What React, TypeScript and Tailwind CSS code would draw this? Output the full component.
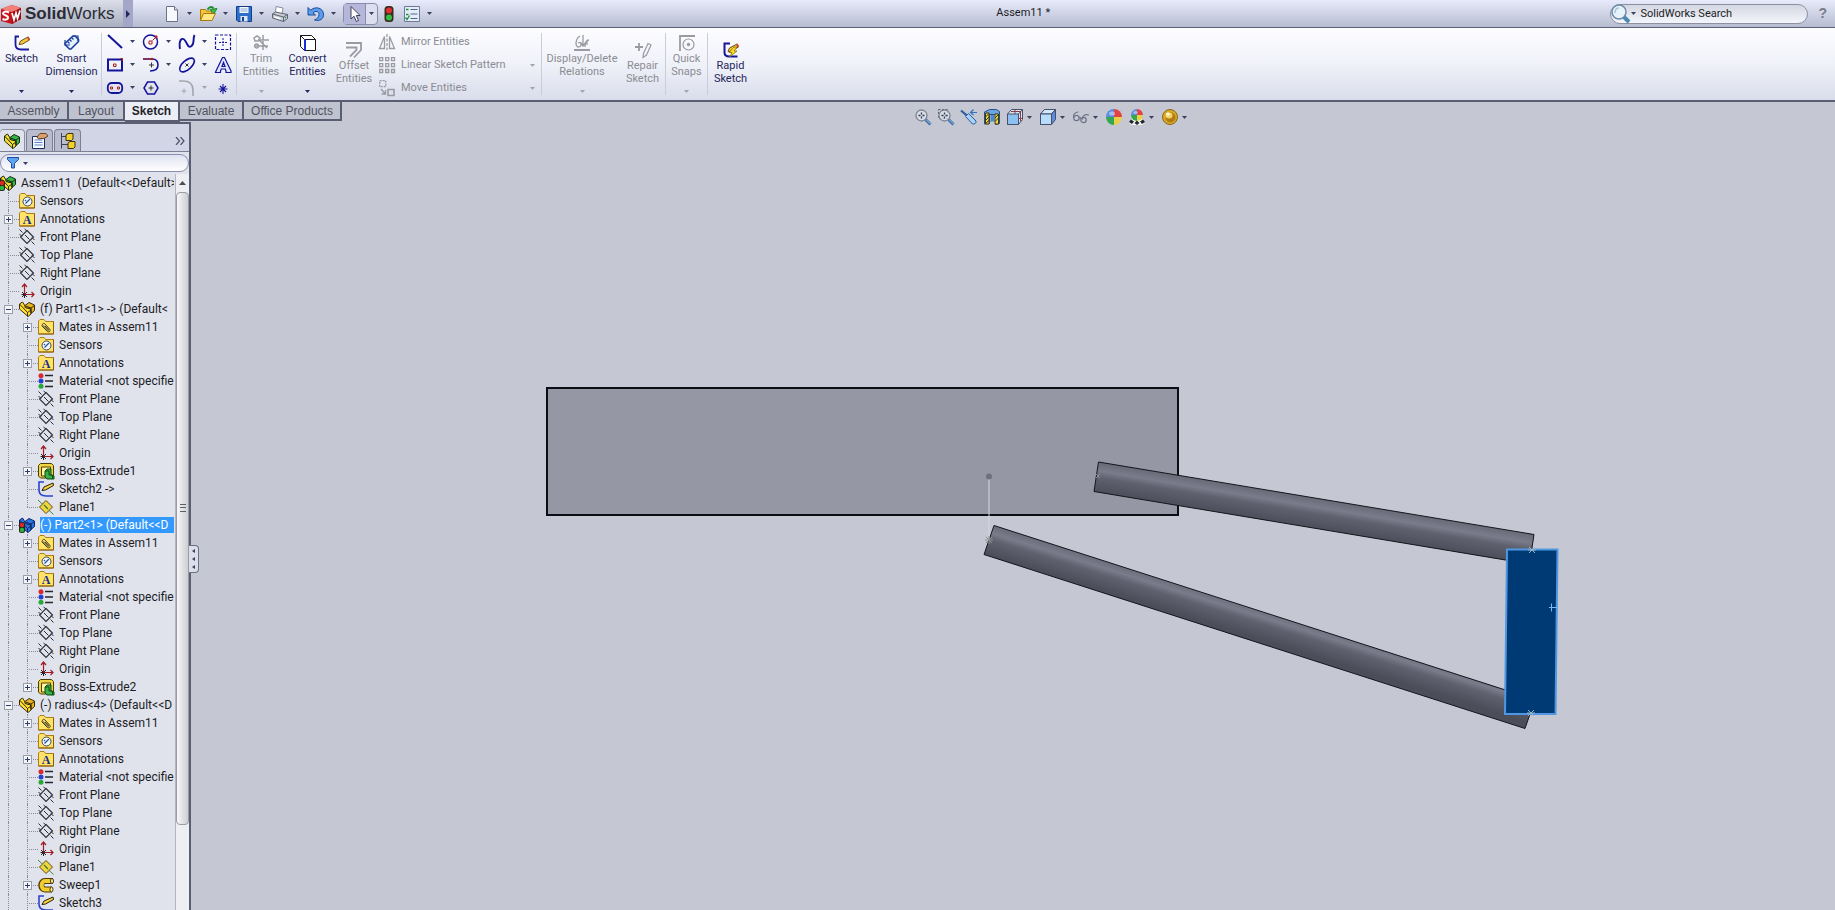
import React from "react";

type Kids = { children?: React.ReactNode };

const Icon = ({ children, size = "h-4 w-4" }: Kids & { size?: string }) => (
  <svg viewBox="0 0 16 16" className={`${size} shrink-0 overflow-visible`} fill="none" aria-hidden="true">
    {children}
  </svg>
);

const Caret = ({ className = "text-[#3c4160]" }: { className?: string }) => (
  <svg viewBox="0 0 5 3" className={`h-[3px] w-[5px] shrink-0 ${className}`} aria-hidden="true">
    <path d="M0 0h5L2.500 3z" fill="currentColor" />
  </svg>
);

/* ---------- title bar icons ---------- */

const LogoCube = () => (
  <svg viewBox="0 0 22 20" className="h-5 w-[22px] shrink-0" aria-hidden="true">
    <path d="M1 5 12 1l9 3v11l-9 5L1 17z" fill="#c8141c" />
    <path d="m1 5 11-4 9 3-9 4z" fill="#f08078" />
    <path d="M12 8l9-4v11l-9 5z" fill="#a00c14" />
    <path d="M9 8.500C6 7 3 7.500 3 9.500s5 1.500 5 4-3.500 2.500-5.500 1.500" stroke="#fff" strokeWidth="2" fill="none" />
    <path d="m12 9 2 7 2-7 1.500 5.500L20 6.500" stroke="#fff" strokeWidth="1.700" fill="none" />
  </svg>
);

const NewIcon = () => (
  <Icon>
    <path d="M2.500.5h8l3 3.500v11.500h-11z" fill="#f7f9fd" stroke="#6c7388" />
    <path d="M10.500.5V4h3" stroke="#6c7388" fill="#dfe4ee" />
  </Icon>
);
const OpenIcon = () => (
  <Icon>
    <path d="M.5 14.500v-11h5l1 1.500h5v3" fill="#f3c53c" stroke="#a8780c" />
    <path d="m.5 14.500 3-7h12l-3.500 7z" fill="#ffe680" stroke="#a8780c" />
    <path d="M7.500 3.500C9 1 12 0 13.500 2.500" stroke="#1f8c2c" strokeWidth="2" />
    <path d="M17 2.500 14 7.500 10 3.500z" fill="#3cc04a" stroke="#1f8c2c" />
  </Icon>
);
const SaveIcon = () => (
  <Icon>
    <path d="M.5.5h15v15H2l-1.500-1.500z" fill="#2c6fc8" stroke="#123f8c" />
    <path d="M3.500 1h9v6h-9z" fill="#f4f8ff" />
    <path d="M4.500 3h7m-7 2h7" stroke="#8ca6d0" />
    <path d="M4.500 10h7v5.500h-7z" fill="#dde6f6" />
    <path d="M6 11h2v4H6z" fill="#173f86" />
  </Icon>
);
const PrintIcon = () => (
  <Icon>
    <path d="m3.500 7 .5-6.500 7 1.500-1 5.500" fill="#fff" stroke="#8890a0" />
    <path d="m.5 8 3-2 12 2.500v4l-4 3-11-3.500z" fill="#c8ccd4" stroke="#5c6270" />
    <path d="m.5 8 11 3 4-2.500M11.500 11v4.500" stroke="#5c6270" />
    <path d="m2.500 11 6 1.700" stroke="#fff" strokeWidth="1.500" />
    <circle cx="13.500" cy="11.500" r=".8" fill="#2c9c3c" />
  </Icon>
);
const UndoIcon = () => (
  <Icon>
    <path d="M0 1.500V9h7.500L5 6.800C7.500 4.500 11 5 11 8.500c0 2.700-2 4.500-4.500 5.500C11.500 15.500 16 13 15.500 8 15 1.500 7 0 2.500 4.200z" fill="#5c9ce8" stroke="#1a4da0" />
  </Icon>
);
const CursorIcon = () => (
  <Icon>
    <path d="M4 .5v12.500l3-2.800L9.300 15.500l2.200-1-2.200-5H13z" fill="#fff" stroke="#404458" />
  </Icon>
);
const LightIcon = () => (
  <Icon>
    <rect x="3.500" y="0" width="9" height="16" rx="3.500" fill="#3a2c20" />
    <circle cx="8" cy="4.500" r="3" fill="#e03030" />
    <circle cx="8" cy="11.500" r="3" fill="#30c040" />
  </Icon>
);
const OptionsIcon = () => (
  <Icon>
    <path d="M.5.500h15v15H.5z" fill="#e6edf6" stroke="#6a7a98" />
    <path d="M6.500 3.500h7m-7 4.500h7m-7 4.500h7" stroke="#4c6890" />
    <path d="M2 3.500h2.500M2 8.500h2.500M1.500 11.500 3 13.500l2.500-4" stroke="#219040" strokeWidth="1.300" />
  </Icon>
);

/* ---------- ribbon icons ---------- */

const Pencil = () => (
  <>
    <path d="m5 9.500 1.500-3.500L14 2l1.500 3L8.500 9z" fill="#f6c63c" stroke="#5c4010" strokeWidth=".9" />
    <path d="m13 2.500 1.500 3 1.500-1-1.200-3z" fill="#c84838" />
  </>
);
const SketchIcon = () => (
  <Icon>
    <path d="M5 1.500H1.500v8c0 3.500 2 5 5.500 5h8" stroke="#1a1a9c" strokeWidth="1.800" />
    <Pencil />
  </Icon>
);
const DimensionIcon = () => (
  <Icon>
    <path d="M1 8.500 3.500 6 9 1h2l3.500 3.500v2L7 14H5.500L1.500 10z" fill="#e4f1ff" stroke="#1c3c9c" strokeWidth="1.600" />
    <path d="m3.500 6.500 2 2m0-4 2 2m0-4 2 2" stroke="#1c3c9c" strokeWidth="1.200" />
    <path d="M1 5v5h5M9 1h5v5" stroke="#1c3c9c" strokeWidth="1.200" />
  </Icon>
);
const navy = "#14149a";
const red = "#b01c1c";
const LineIcon = () => (
  <Icon>
    <path d="m1 1 14 13" stroke={navy} strokeWidth="2" />
  </Icon>
);
const CircleIcon = () => (
  <Icon>
    <circle cx="7.500" cy="8" r="7" stroke={navy} strokeWidth="1.500" />
    <path d="M6 7h3v3H6zM9.500 6.500 14 2m-3 0h3v3" stroke={red} />
  </Icon>
);
const SplineIcon = () => (
  <Icon>
    <path d="M1 15C-.5 6 3 2.500 6 6.500s3 8 6.500 5.500 1-7 3-11" stroke={navy} strokeWidth="1.900" />
  </Icon>
);
const RegionIcon = () => (
  <Icon>
    <path d="M.5 1h15v14.500H.5z" stroke={navy} strokeDasharray="3 1.500" strokeWidth="1.200" />
    <path d="M4 8.500h9M8 4v9" stroke={navy} strokeDasharray="2 1" />
  </Icon>
);
const RectIcon = () => (
  <Icon>
    <path d="M1 2.500h14v11H1z" stroke={navy} strokeWidth="2" />
    <path d="M6.500 7h2.500v2.500H6.500zM13.500 1.500h2V4" stroke={red} />
  </Icon>
);
const ArcIcon = () => (
  <Icon>
    <path d="M0 2h9c4 0 6 2.500 6 6 0 4-3 6-8 6" stroke={navy} strokeWidth="1.600" />
    <path d="M0 2h8" stroke={red} />
    <path d="M6 8h5M8.500 5.500v5" stroke="#333" />
    <circle cx="9" cy="2" r="1.300" fill={red} />
  </Icon>
);
const EllipseIcon = () => (
  <Icon>
    <ellipse cx="8" cy="8" rx="9" ry="4.500" transform="rotate(-42 8 8)" stroke={navy} strokeWidth="1.600" />
    <path d="m6.500 6.500 3 3m0-3-3 3" stroke="#333" />
  </Icon>
);
const TextAIcon = () => (
  <Icon>
    <path d="M.5 15.500h5v-1.500l.8-2h4l.7 2v1.500h5V14L9.500 .5h-2L1 14zM7 9.500h3L8.500 5.500z" fill="#dfe4ff" stroke={navy} strokeWidth="1.200" />
  </Icon>
);
const SlotIcon = () => (
  <Icon>
    <rect x="0.800" y="3" width="14.400" height="10" rx="4" stroke={navy} strokeWidth="1.800" />
    <path d="M3.500 7h2v2h-2zM10.500 7h2v2h-2z" stroke={red} />
  </Icon>
);
const PolygonIcon = () => (
  <Icon>
    <path d="M4.500 2h7L15 8l-3.500 6h-7L1 8z" stroke={navy} strokeWidth="1.500" />
    <path d="M5.500 8h5M8 5.500v5" stroke="#333" />
  </Icon>
);
const FilletIcon = () => (
  <Icon>
    <path d="M0 1h4c7 0 10 3 10 9v6" stroke="#a4a6ae" strokeWidth="1.600" />
    <path d="M2.500 11h5M5 8.500v5" stroke="#a4a6ae" />
  </Icon>
);
const PointIcon = () => (
  <Icon>
    <path d="M8 4v10M3.500 9h9M5 6l6 6m0-6-6 6" stroke={navy} strokeWidth="1.100" />
  </Icon>
);
const grey = "#9a9ba2";
const TrimIcon = () => (
  <Icon>
    <path d="M1 11h14M10 0v5m0 1v9M5 5h11M1 3l3-2 3 2-2 3H2zM6 5l3 3 5 5" stroke={grey} strokeWidth="1.500" />
    <circle cx="3.500" cy="11" r="2" stroke={grey} strokeWidth="1.300" />
  </Icon>
);
const ConvertIcon = () => (
  <Icon>
    <path d="M.5.5h11l4 4v11h-11l-4-4z" fill="#fff" stroke="#16161c" />
    <path d="M4.500 4.500h11m-15-4 4 4" stroke="#16161c" />
    <path d="M5 4.500v11" stroke="#1c2ce0" strokeWidth="2" />
  </Icon>
);
const OffsetIcon = () => (
  <Icon>
    <path d="M0 1h15v7l-7 7.500M0 5.500h10.500V8L4 14.500" stroke={grey} strokeWidth="1.800" />
  </Icon>
);
const MirrorIcon = () => (
  <Icon>
    <path d="M5.500 2.500v12h-5zM10.500 2.500v12h5z" stroke={grey} strokeWidth="1.300" />
    <path d="M8 0v16" stroke={grey} strokeDasharray="3 1.500" strokeWidth="1.300" />
  </Icon>
);
const PatternIcon = () => (
  <Icon>
    <path d="M.7.7h3v3h-3zM6.700.7h3v3h-3zM12.500.7h3v3h-3zM.7 6.700h3v3h-3zM6.700 6.700h3v3h-3zM12.500 6.700h3v3h-3zM.7 12.500h3v3h-3zM6.700 12.500h3v3h-3zM12.500 12.500h3v3h-3z" stroke={grey} strokeWidth="1.300" />
  </Icon>
);
const MoveIcon = () => (
  <Icon>
    <path d="M.7.7h6v6h-6z" stroke={grey} strokeDasharray="2 1" strokeWidth="1.300" />
    <path d="M9 9.500h6v6H9z" stroke={grey} strokeWidth="1.600" />
    <path d="m2 9 4 4.500M6.500 10v4h-4" stroke={grey} strokeWidth="1.300" />
  </Icon>
);
const RelationsIcon = () => (
  <Icon>
    <path d="M6 1C1 4 1 12 4.500 12S8 6 4 8M9 0v10m-2.500-3L9 11l3-4M11 12c0-4 1-7 4-7m-2 0v5" stroke={grey} strokeWidth="1.300" />
    <path d="M0 15h16" stroke={grey} strokeWidth="2" />
  </Icon>
);
const RepairIcon = () => (
  <Icon>
    <path d="M0 5h8M4 1v8" stroke={grey} strokeWidth="1.800" />
    <path d="m8 15.500.5-4L13 1.500l3 1.500-4.500 10z" stroke={grey} strokeWidth="1.200" />
  </Icon>
);
const SnapsIcon = () => (
  <Icon>
    <path d="M1 16V1h15" stroke={grey} strokeWidth="1.800" />
    <circle cx="9.500" cy="9.500" r="5.500" stroke={grey} strokeWidth="1.200" />
    <circle cx="9.500" cy="9.500" r="1.700" fill={grey} />
  </Icon>
);
const RapidIcon = () => (
  <Icon>
    <path d="M7 1.500H1.500v9c0 3 2 4 5 4h8" stroke="#1414a0" strokeWidth="2" />
    <Pencil />
    <path d="m11 5-5 5.500h3L6.500 15 14 9h-3l3-4z" fill="#ffe020" stroke="#8c6c08" strokeWidth=".8" />
  </Icon>
);

/* ---------- view toolbar icons ---------- */

const Lens = ({ area = false }: { area?: boolean }) => (
  <Icon>
    {area && <path d="M.5.500h9v9h-9z" stroke="#5c6278" strokeDasharray="2 1.500" />}
    <path d="m10.500 10.500 5 5" stroke="#3c6ca8" strokeWidth="3" />
    <path d="m11 10.500 4.500 4.500" stroke="#9cc4ec" strokeWidth="1" />
    <circle cx="6.500" cy="6.500" r="5.500" fill="#dfe5ee" fillOpacity=".7" stroke="#7c8494" strokeWidth="1.300" />
    <path d="M3.500 6.500h2m2 0h2m-3-3v2m0 2v2" stroke="#343a4c" strokeWidth="1.300" />
  </Icon>
);
const PrevViewIcon = () => (
  <Icon>
    <path d="m0 1.500 7 6" stroke="#2c5ca0" strokeWidth="2.200" />
    <path d="m4.500 7.500 3-3L15 12c.5 2-1.500 3.500-3.500 3z" fill="#a8d0f4" stroke="#2c5ca0" />
    <path d="M16 3.500h-6m2.500-3L9.500 3.500l3 2.500" stroke="#3474bc" strokeWidth="1.200" />
  </Icon>
);
const SectionIcon = () => (
  <Icon>
    <path d="m.5 3 5-2.500h7l3 2v12l-4 1v-10h-6v9l-5 .5z" fill="#6ca4e0" stroke="#24508c" />
    <path d="M1.500 4h3.500v11H1.500zM11 5h3.500v10H11z" fill="#f4d83c" stroke="#3c3810" />
    <path d="m1.500 8 3.500-3.500m-3.500 7L5 8m-3.500 6.500L5 11.500M11 9l3.500-3.500M11 12.500 14.500 9" stroke="#3c3810" />
    <path d="M6.500 6h4v6l-4 1z" fill="#4c88d0" />
  </Icon>
);
const CubeIcon = ({ wire = false }: { wire?: boolean }) => (
  <Icon>
    <path d="m.5 5 4-4.500h11v10l-4 5H.500z" fill={wire ? "#dce2ee" : "#5c8cdc"} stroke="#46506c" />
    {!wire && <path d="m.5 5 4-4.500h11l-4 4.500z" fill="#d4e8fc" stroke="#46506c" />}
    <path d="M.5 5h11v10.500H.500z" fill={wire ? "#8cc0f0" : "#b8dcfa"} stroke="#46506c" />
    <path d="m11.500 5 4-4.500" stroke="#46506c" />
    {wire && <path d="M8 .5V5m-4-2.500h10m-.5 0v10m-2-3h4" stroke="#84404c" />}
  </Icon>
);
const GlassesIcon = () => (
  <Icon>
    <path d="M5.500 3C2 3 0 5.500.5 9m9 1.500C9 7 12 4.500 16 6" stroke="#6c7284" strokeWidth="1.200" />
    <circle cx="3.500" cy="9" r="2.700" stroke="#6c7284" strokeWidth="1.200" />
    <circle cx="10.500" cy="11" r="2.700" stroke="#6c7284" strokeWidth="1.200" />
    <path d="M6 8.500c1-1 2 0 2 1.500" stroke="#6c7284" />
  </Icon>
);
const BallIcon = () => (
  <>
    <path d="M8 8V0a8 8 0 0 0-8 8z" fill="#5c8ce0" />
    <path d="M8 8h8a8 8 0 0 0-8-8z" fill="#e04444" />
    <path d="M8 8v8a8 8 0 0 0 8-8z" fill="#e8d04c" />
    <path d="M8 8H0a8 8 0 0 0 8 8z" fill="#34a850" />
    <ellipse cx="6" cy="4.500" rx="3" ry="2" fill="#fff" fillOpacity=".45" />
  </>
);
const AppearanceIcon = () => (
  <Icon>
    <BallIcon />
  </Icon>
);
const SceneIcon = () => (
  <Icon>
    <path d="m0 14 3-4h10l3 4-3 2H3z" fill="#f4f4f4" />
    <path d="m0 13 2-2.500 3 2-2 2.500zm5.500 1L8 11.500l2.500 2.500L8 16zm5.500-1.500 3-2 2 2.500-3 2z" fill="#24262c" />
    <g transform="translate(2 0) scale(.75)">
      <BallIcon />
    </g>
  </Icon>
);
const RenderIcon = () => (
  <Icon>
    <circle cx="8" cy="8" r="7.500" fill="#d8a828" stroke="#8c6814" />
    <circle cx="8.500" cy="8.500" r="5" fill="#b07c14" />
    <ellipse cx="7" cy="6.500" rx="3.500" ry="3" fill="#f4d468" />
    <ellipse cx="6" cy="5" rx="1.800" ry="1.500" fill="#fffce0" />
  </Icon>
);

/* ---------- feature tree icons ---------- */

const PartShape = ({ a, b, line }: { a: string; b: string; line: string }) => (
  <>
    <path d="m.5 3 3-2 3.500 5.500 5 1.500v5l-3 2.500L.500 8z" fill={a} stroke={line} />
    <path d="m.5 3 8 8.500v4M8.500 11.500 12 9" stroke={line} />
    <path d="m6 4.500 4-3L15.500 4v5.500L12 12.500V8L6 6.500z" fill={b} stroke={line} />
    <path d="m6.500 5 5.500 2 3.500-2.500M12 7v5" stroke={line} />
  </>
);
const PartIcon = () => (
  <Icon>
    <PartShape a="#ffe030" b="#e8b420" line="#3c2c08" />
  </Icon>
);
const AssemblyIcon = () => (
  <Icon>
    <PartShape a="#f8dc30" b="#34b848" line="#1c2c10" />
  </Icon>
);
const RootIcon = () => (
  <Icon>
    <PartShape a="#f8dc30" b="#34b848" line="#1c2c10" />
    <rect x="-1" y="5" width="6" height="11" rx="2.500" fill="#282420" />
    <circle cx="2" cy="8" r="2.200" fill="#e02828" />
    <circle cx="2" cy="13" r="2.200" fill="#28b838" />
  </Icon>
);
const SelectedPartIcon = () => (
  <Icon>
    <PartShape a="#2c74e0" b="#2c74e0" line="#0c2868" />
    <rect x="0" y="5" width="6" height="11" rx="2.500" fill="#282420" />
    <circle cx="3" cy="8" r="2.200" fill="#e02828" />
    <circle cx="3" cy="13" r="2.200" fill="#28b838" />
  </Icon>
);
const Folder = ({ children }: Kids) => (
  <Icon>
    <path d="M.5 15V2L2 .5h4L7.500 2.500h8V15z" fill="#ffe468" stroke="#b07c14" />
    <path d="M.5 15h15V2.500" stroke="#8c5c0c" />
    {children}
  </Icon>
);
const SensorIcon = () => (
  <Folder>
    <circle cx="8.500" cy="8.500" r="4.500" fill="#f4f8fc" stroke="#3c4458" />
    <path d="M6.500 10.500 11 6M6 7l1 1" stroke="#2454a0" strokeWidth="1.200" />
  </Folder>
);
const AnnotationIcon = () => (
  <Folder>
    <text x="8" y="13" textAnchor="middle" fill="#1c2c8c" className="font-['Liberation_Serif',serif] text-[12px] font-bold">A</text>
  </Folder>
);
const MatesIcon = () => (
  <Folder>
    <path d="M3.500 6.500 9 12c2 2 4.500 0 2.500-2L7 5C5.500 3.500 3.500 5 5 6.500l4.500 4.500c1 .8 1.500 0 1-.8L7 7" stroke="#3c3820" />
  </Folder>
);
const PlaneIcon = () => (
  <Icon>
    <path d="M8 1.500 14.500 8 8 14.500 1.500 8z" stroke="#2c2e36" strokeWidth="1.100" />
    <path d="m.5.500 3 3M6 6l4.500 4.500M12.500 12.500l3 3M.5 5l2.500 2.500M5.500 0 8 2M13 8.500l2.500 2.500" stroke="#2c2e36" />
  </Icon>
);
const YellowPlaneIcon = () => (
  <Icon>
    <path d="m0 1 15.500 14.500" stroke="#3c8c3c" />
    <path d="M8 1.500 14.500 8 8 14.500 1.500 8z" fill="#f0d440" stroke="#5c4c10" />
    <path d="m6 6 4 4" stroke="#3c7c24" strokeWidth="1.200" />
  </Icon>
);
const OriginIcon = () => (
  <Icon>
    <path d="M5.500 12V1.500M3 4l2.500-3L8 4M6 11.500h9M12.500 9l2.500 2.500-2.500 2.500" stroke="#a01c24" strokeWidth="1.200" />
    <path d="m3 9 5 5m0-5-5 5M2.500 11.500h3M5.500 12v3" stroke="#24262c" />
  </Icon>
);
const MaterialIcon = () => (
  <Icon>
    <path d="M7 2.500h8m-8 5.500h8m-8 5.500h8" stroke="#24262c" strokeWidth="1.500" />
    <circle cx="3" cy="2.700" r="2.500" fill="#d82830" />
    <circle cx="3" cy="8" r="2.500" fill="#2840d0" />
    <circle cx="3" cy="13.300" r="2.500" fill="#28a838" />
  </Icon>
);
const ExtrudeIcon = () => (
  <Icon>
    <path d="M.5 2.500 2.500.500h11l2 2V13l-2 2h-11l-2-2z" fill="#f0d440" stroke="#4c3c08" />
    <path d="M3.500 4h9v9h-9z" fill="#fff4a0" stroke="#4c3c08" />
    <path d="m7 8 2-2h4v6l3 1v3h-7l-2-2z" fill="#3cb048" stroke="#0c4c14" />
    <path d="M7 8h4v4h3.500v4" stroke="#0c4c14" />
  </Icon>
);
const TreeSketchIcon = () => (
  <Icon>
    <path d="M6 1H1v8c0 4 2 6 7 6h7" stroke="#2c44d0" strokeWidth="1.600" />
    <path d="m4 9.500 2-3.500 9-4 .5 2.500-8 4.500z" fill="#f8d040" stroke="#24200c" />
  </Icon>
);
const SweepIcon = () => (
  <Icon>
    <path d="M15 4H7C2 4 2 12.500 7 12.500h7" stroke="#4c3808" strokeWidth="6" />
    <path d="M14.500 4H7C2.500 4 2.500 12.500 7 12.500h6.500" stroke="#f4cc2c" strokeWidth="4" />
    <ellipse cx="14" cy="4" rx="1.500" ry="2.500" fill="#fff0a0" stroke="#4c3808" />
    <ellipse cx="13.500" cy="12.500" rx="1.500" ry="2.500" fill="#fff0a0" stroke="#4c3808" />
  </Icon>
);
const PropertyIcon = () => (
  <Icon>
    <path d="M.5 3.500h12v12H.5z" fill="#f4f8ff" stroke="#1c2c5c" />
    <path d="M2.500 7h8m-8 2.500h8m-8 2.500h8" stroke="#5c84c4" />
    <path d="m5 4 3-3.500h6L16 3l-4 2.500H9L6.500 6z" fill="#d8a070" stroke="#6c4424" />
  </Icon>
);
const ConfigIcon = () => (
  <Icon>
    <path d="M1.500 0v15.500M1.500 3.500H6m-4.500 8H8" stroke="#3c4050" />
    <path d="m6 2 2-1.500h5V6l-1.500 1.500H6zM8 10l2-1.500h5V14l-1.500 1.500H8z" fill="#f4d02c" stroke="#3c3008" />
  </Icon>
);

/* ---------- ribbon building blocks ---------- */

const RibbonButton = ({ icon, lines, width, disabled = false, caret = false, low = false }: {
  icon: React.ReactNode; lines: string[]; width: string; disabled?: boolean; caret?: boolean; low?: boolean;
}) => (
  <button
    type="button"
    disabled={disabled}
    className={`flex h-full shrink-0 flex-col items-center whitespace-nowrap leading-[13px] ${width} ${low ? "pt-[14px]" : "pt-[7px]"} ${disabled ? "text-[#8b8c93]" : "text-[#26265c]"}`}
  >
    {icon}
    <span className="mt-px flex h-[34px] flex-col">
      {lines.map((l) => (
        <span key={l}>{l}</span>
      ))}
    </span>
    {caret && <Caret className={`mt-[4px] ${disabled ? "text-[#a4a5ac]" : "text-[#26265c]"}`} />}
  </button>
);

const Divider = () => <div className="mx-px h-[62px] w-px shrink-0 bg-[#c9ccd9]" />;

const shapes: { label: string; icon: React.ReactNode; caret?: boolean; off?: boolean }[] = [
  { label: "Line", icon: <LineIcon />, caret: true },
  { label: "Circle", icon: <CircleIcon />, caret: true },
  { label: "Spline", icon: <SplineIcon />, caret: true },
  { label: "Region", icon: <RegionIcon /> },
  { label: "Rectangle", icon: <RectIcon />, caret: true },
  { label: "Arc", icon: <ArcIcon />, caret: true },
  { label: "Ellipse", icon: <EllipseIcon />, caret: true },
  { label: "Text", icon: <TextAIcon /> },
  { label: "Slot", icon: <SlotIcon />, caret: true },
  { label: "Polygon", icon: <PolygonIcon /> },
  { label: "Fillet", icon: <FilletIcon />, caret: true, off: true },
  { label: "Point", icon: <PointIcon /> },
];

/* ---------- feature tree ---------- */

type Node = {
  text: string;
  icon: React.ReactNode;
  depth: 0 | 1 | 2;
  toggle?: "+" | "-";
  last?: boolean;
  selected?: boolean;
};

const common = (depth: 1 | 2): Node[] => [
  { text: "Front Plane", icon: <PlaneIcon />, depth },
  { text: "Top Plane", icon: <PlaneIcon />, depth },
  { text: "Right Plane", icon: <PlaneIcon />, depth },
  { text: "Origin", icon: <OriginIcon />, depth },
];
const partHead: Node[] = [
  { text: "Mates in Assem11", icon: <MatesIcon />, depth: 2, toggle: "+" },
  { text: "Sensors", icon: <SensorIcon />, depth: 2 },
  { text: "Annotations", icon: <AnnotationIcon />, depth: 2, toggle: "+" },
  { text: "Material <not specifie", icon: <MaterialIcon />, depth: 2 },
  ...common(2),
];
const tree: Node[] = [
  { text: "Assem11  (Default<<Default>", icon: <RootIcon />, depth: 0 },
  { text: "Sensors", icon: <SensorIcon />, depth: 1 },
  { text: "Annotations", icon: <AnnotationIcon />, depth: 1, toggle: "+" },
  ...common(1),
  { text: "(f) Part1<1> -> (Default<", icon: <PartIcon />, depth: 1, toggle: "-" },
  ...partHead,
  { text: "Boss-Extrude1", icon: <ExtrudeIcon />, depth: 2, toggle: "+" },
  { text: "Sketch2 ->", icon: <TreeSketchIcon />, depth: 2 },
  { text: "Plane1", icon: <YellowPlaneIcon />, depth: 2, last: true },
  { text: "(-) Part2<1> (Default<<D", icon: <SelectedPartIcon />, depth: 1, toggle: "-", selected: true },
  ...partHead,
  { text: "Boss-Extrude2", icon: <ExtrudeIcon />, depth: 2, toggle: "+", last: true },
  { text: "(-) radius<4> (Default<<D", icon: <PartIcon />, depth: 1, toggle: "-" },
  ...partHead,
  { text: "Plane1", icon: <YellowPlaneIcon />, depth: 2 },
  { text: "Sweep1", icon: <SweepIcon />, depth: 2, toggle: "+" },
  { text: "Sketch3", icon: <TreeSketchIcon />, depth: 2 },
];

const Guide = ({ branch, toggle, last }: { branch?: boolean; toggle?: "+" | "-"; last?: boolean }) => (
  <span className="relative h-full w-[19px] shrink-0">
    <span className={`absolute left-2 top-0 border-l border-dotted border-[#8a8d98] ${last ? "h-1/2" : "h-full"}`} />
    {branch && <span className="absolute left-2 right-0 top-1/2 border-t border-dotted border-[#8a8d98]" />}
    {toggle && (
      <button
        type="button"
        aria-label={toggle === "+" ? "Expand" : "Collapse"}
        className="absolute left-1 top-[5px] flex h-[9px] w-[9px] items-center justify-center border border-[#9a9ca6] bg-[#f4f5f9]"
      >
        <svg viewBox="0 0 5 5" className="h-[5px] w-[5px]" aria-hidden="true">
          <path d={toggle === "+" ? "M0 2.500h5M2.500 0v5" : "M0 2.500h5"} stroke="#2c3c6c" />
        </svg>
      </button>
    )}
  </span>
);

const TreeRow = ({ node }: { node: Node }) => (
  <li className="flex h-[18px] shrink-0 items-center">
    {node.depth === 2 && <Guide />}
    {node.depth > 0 && <Guide branch toggle={node.toggle} last={node.last} />}
    {node.icon}
    <span
      className={`ml-[5px] min-w-0 flex-1 overflow-hidden whitespace-pre leading-4 ${node.selected ? "bg-[#3399ff] text-white" : ""}`}
    >
      {node.text}
    </span>
  </li>
);

/* ---------- model view ---------- */

const Model = () => (
  <svg className="absolute inset-0 h-full w-full" role="img" aria-label="Assembly model">
    <defs>
      <linearGradient id="rodA" gradientUnits="userSpaceOnUse" x1="1098" y1="462" x2="1093" y2="492">
        <stop offset="0" stopColor="#686a78" />
        <stop offset=".28" stopColor="#7a7c8b" />
        <stop offset=".5" stopColor="#5f616f" />
        <stop offset="1" stopColor="#4b4d59" />
      </linearGradient>
      <linearGradient id="rodB" gradientUnits="userSpaceOnUse" x1="994" y1="525" x2="985" y2="554">
        <stop offset="0" stopColor="#686a78" />
        <stop offset=".28" stopColor="#7a7c8b" />
        <stop offset=".5" stopColor="#5f616f" />
        <stop offset="1" stopColor="#4b4d59" />
      </linearGradient>
    </defs>
    <g transform="translate(0 -102)">
      <path d="M547 388h631v127H547z" fill="#9598a4" stroke="#0c0c14" strokeWidth="2" />
      <path d="m1098.500 462 435.500 72.500-4.500 29.500L1094 491.500z" fill="url(#rodA)" stroke="#14151c" />
      <path d="m994 525.500 541 174-10 29-541-174z" fill="url(#rodB)" stroke="#14151c" />
      <path d="M989 477v62" stroke="#d4d6de" />
      <circle cx="989" cy="476.500" r="3" fill="#6e717d" />
      <path d="m986 537 6 6m0-6-6 6m3-7v8m-4-4h8M1096 474l4 4m0-4-4 4" stroke="#8e9094" />
      <path d="M1507 549.500h50.500l-2 164.500H1505z" fill="#003a75" stroke="#4f97e2" strokeWidth="2" />
      <path d="M1549 607.500h8m-5.500-4v8" stroke="#7cb8f4" />
      <path d="m1529 547 6 6m0-6-6 6m-1-3h8M1528 710l6 6m0-6-6 6m-1-3h8" stroke="#9cb4c4" />
    </g>
  </svg>
);

const quick: { label: string; icon: React.ReactNode }[] = [
  { label: "New", icon: <NewIcon /> },
  { label: "Open", icon: <OpenIcon /> },
  { label: "Save", icon: <SaveIcon /> },
  { label: "Print", icon: <PrintIcon /> },
  { label: "Undo", icon: <UndoIcon /> },
];

const tabs = [
  { text: "Assembly", width: "w-[69px]" },
  { text: "Layout", width: "w-14" },
  { text: "Sketch", width: "w-[55px]" },
  { text: "Evaluate", width: "w-16" },
  { text: "Office Products", width: "w-[98px]" },
];

const views: { label: string; icon: React.ReactNode; caret?: boolean }[] = [
  { label: "Zoom to fit", icon: <Lens /> },
  { label: "Zoom to area", icon: <Lens area /> },
  { label: "Previous view", icon: <PrevViewIcon /> },
  { label: "Section view", icon: <SectionIcon /> },
  { label: "View orientation", icon: <CubeIcon wire />, caret: true },
  { label: "Display style", icon: <CubeIcon />, caret: true },
  { label: "Hide or show items", icon: <GlassesIcon />, caret: true },
  { label: "Edit appearance", icon: <AppearanceIcon /> },
  { label: "Apply scene", icon: <SceneIcon />, caret: true },
  { label: "View settings", icon: <RenderIcon />, caret: true },
];

const entityCommands = [
  { text: "Mirror Entities", icon: <MirrorIcon />, caret: false },
  { text: "Linear Sketch Pattern", icon: <PatternIcon />, caret: true },
  { text: "Move Entities", icon: <MoveIcon />, caret: true },
];

export default function App() {
  return (
    <div className="flex h-screen flex-col overflow-hidden bg-[#c5c8d3] font-[Roboto,'Open_Sans',sans-serif] text-[12px] text-[#1c1c24]">
      <header className="flex h-7 shrink-0 items-center border-b border-[#5c6074] bg-gradient-to-b from-[#e8ebfb] to-[#b6bdd0]">
        <div className="flex h-full w-[123px] shrink-0 items-center bg-gradient-to-b from-[#dcdfe9] to-[#a9afbf]">
          <LogoCube />
          <span className="ml-[3px] font-['Liberation_Sans',sans-serif] text-[17px] leading-5 text-[#2c2c34]">
            <b>Solid</b>Works
          </span>
        </div>
        <button type="button" aria-label="Show menu" className="flex h-full w-[10px] shrink-0 items-center justify-center bg-[#a3a6c8]">
          <svg viewBox="0 0 4 8" className="h-2 w-1" aria-hidden="true">
            <path d="m0 0 4 4-4 4z" fill="#26265c" />
          </svg>
        </button>
        <div className="ml-[31px] flex shrink-0 items-center">
          {quick.map((q) => (
            <button key={q.label} type="button" aria-label={q.label} className="flex w-9 items-center gap-[7px]">
              {q.icon}
              <Caret />
            </button>
          ))}
          <button type="button" aria-label="Select" className="-ml-px flex h-[22px] w-[35px] items-center rounded border border-[#8a8eac] bg-[#dcdff0]">
            <span className="flex h-full w-[22px] items-center justify-center border-r border-[#8a8eac] bg-[#b4b6da]">
              <CursorIcon />
            </span>
            <span className="flex flex-1 justify-center">
              <Caret />
            </span>
          </button>
          <button type="button" aria-label="Rebuild" className="ml-[3px]">
            <LightIcon />
          </button>
          <button type="button" aria-label="Options" className="ml-[7px] flex items-center gap-[7px]">
            <OptionsIcon />
            <Caret />
          </button>
        </div>
        <h1 className="flex-1 pl-1 text-center text-[11px]">Assem11 *</h1>
        <label className="mr-[10px] flex h-5 w-[198px] shrink-0 items-center rounded-[10px] border border-[#8c90a0] bg-gradient-to-b from-[#d4d7e2] to-[#f4f6fc]">
          <svg viewBox="0 0 20 20" className="h-5 w-5 shrink-0 overflow-visible" aria-hidden="true">
            <path d="m12 12 6 6" stroke="#4c88b4" strokeWidth="4" />
            <circle cx="8" cy="8" r="7" fill="#e8f2fa" stroke="#6c8ca8" strokeWidth="1.500" />
            <path d="M4 9c0-3 1.500-5 4-5" stroke="#a8c4d8" fill="none" strokeWidth="1.500" />
          </svg>
          <Caret />
          <input aria-label="Search" defaultValue="SolidWorks Search" className="ml-1 w-0 min-w-0 flex-1 bg-transparent text-[11px] leading-4 outline-none" />
        </label>
        <button type="button" aria-label="Help" className="mr-2 font-['Liberation_Sans',sans-serif] text-[14px] font-bold text-[#787c8c]">?</button>
      </header>

      <section aria-label="Sketch commands" className="flex h-[74px] shrink-0 items-center border-b-2 border-[#5a5e72] bg-gradient-to-b from-[#fdfdff] via-[#f0f2f9] to-[#d9dceb] text-[11px]">
        <RibbonButton icon={<SketchIcon />} lines={["Sketch"]} width="w-[43px]" caret />
        <RibbonButton icon={<DimensionIcon />} lines={["Smart", "Dimension"]} width="w-[57px]" caret />
        <Divider />
        <div className="ml-1 grid w-[128px] shrink-0 grid-cols-[36px_36px_36px_16px] gap-y-[7px] pt-px">
          {shapes.map((s) => (
            <button key={s.label} type="button" aria-label={s.label} disabled={s.off} className="flex items-center gap-[7px]">
              {s.icon}
              {s.caret && <Caret className={s.off ? "text-[#a4a5ac]" : "text-[#3c4160]"} />}
            </button>
          ))}
        </div>
        <Divider />
        <RibbonButton icon={<TrimIcon />} lines={["Trim", "Entities"]} width="w-[46px]" disabled caret />
        <RibbonButton icon={<ConvertIcon />} lines={["Convert", "Entities"]} width="w-[47px]" caret />
        <RibbonButton icon={<OffsetIcon />} lines={["Offset", "Entities"]} width="w-[46px]" disabled low />
        <div className="ml-[2px] flex w-[161px] shrink-0 flex-col gap-[7px] pt-[2px]">
          {entityCommands.map((c) => (
            <button key={c.text} type="button" disabled className="flex h-4 items-center gap-[6px] text-[#8b8c93]">
              {c.icon}
              <span className="flex-1 whitespace-nowrap text-left">{c.text}</span>
              {c.caret && <Caret className="mr-[5px] text-[#a4a5ac]" />}
            </button>
          ))}
        </div>
        <Divider />
        <RibbonButton icon={<RelationsIcon />} lines={["Display/Delete", "Relations"]} width="w-[78px]" disabled caret />
        <RibbonButton icon={<RepairIcon />} lines={["Repair", "Sketch"]} width="w-[43px]" disabled low />
        <Divider />
        <RibbonButton icon={<SnapsIcon />} lines={["Quick", "Snaps"]} width="w-[39px]" disabled caret />
        <Divider />
        <RibbonButton icon={<RapidIcon />} lines={["Rapid", "Sketch"]} width="w-[43px]" low />
      </section>

      <main className="relative flex min-h-0 flex-1 flex-col">
        <Model />
        <div className="relative flex h-5 shrink-0 items-start">
          <nav className="flex shrink-0 font-['Liberation_Sans',sans-serif] text-[12px]">
            {tabs.map((t) => (
              <button
                key={t.text}
                type="button"
                className={`border-r-2 border-b-2 border-[#5a5e72] ${t.width} ${t.text === "Sketch" ? "h-5 bg-[#eceef5] font-bold text-[#24242c]" : "h-[19px] bg-[#bfc2cf] text-[#50535f]"}`}
              >
                {t.text}
              </button>
            ))}
          </nav>
          <div className="flex flex-1 items-center justify-center pt-[7px] pr-[68px]">
            {views.map((v) => (
              <button key={v.label} type="button" aria-label={v.label} className={`flex shrink-0 items-center gap-1 ${v.caret ? "w-[33px]" : "w-[23px]"}`}>
                {v.icon}
                {v.caret && <Caret />}
              </button>
            ))}
          </div>
        </div>

        <div className="relative flex min-h-0 flex-1">
          <aside className="flex w-[191px] shrink-0 flex-col border-r-2 border-[#5a5e72] bg-[#e1e3ec]">
            <div className="flex h-[30px] shrink-0 items-end border-b border-t-2 border-b-[#7c8094] border-t-[#5a5e72] bg-[#d2d5e6]">
              <button type="button" aria-label="Feature tree" className="flex h-[22px] w-[25px] items-center justify-center rounded-t border-r border-t border-[#8c90a4] bg-[#e1e3ec]">
                <AssemblyIcon />
              </button>
              <button type="button" aria-label="Properties" className="ml-px flex h-[22px] w-[27px] items-center justify-center rounded-t border border-b-0 border-[#7c8094] bg-[#b9bccc]">
                <PropertyIcon />
              </button>
              <button type="button" aria-label="Configurations" className="ml-px flex h-[22px] w-[27px] items-center justify-center rounded-t border border-b-0 border-[#7c8094] bg-[#b9bccc]">
                <ConfigIcon />
              </button>
              <button type="button" aria-label="More" className="mb-[6px] ml-auto mr-1">
                <svg viewBox="0 0 10 8" className="h-2 w-[10px]" fill="none" aria-hidden="true">
                  <path d="m1 0 3.500 4L1 8m4.500-8L9 4 5.500 8" stroke="#4c5068" strokeWidth="1.200" />
                </svg>
              </button>
            </div>
            <label className="mt-[2px] flex h-[18px] shrink-0 items-center gap-1 rounded-[9px] border border-[#8a8eb0] bg-gradient-to-b from-[#dfe2f0] to-white pl-[6px]">
              <svg viewBox="0 0 12 12" className="h-3 w-3" aria-hidden="true">
                <path d="M.5.500h11v2L7.500 6.500V11h-3V6.500L.5 2.500z" fill="#5ca4ec" stroke="#1c4ca4" />
              </svg>
              <Caret />
              <input aria-label="Filter" className="h-3 min-w-0 flex-1 bg-transparent outline-none" />
            </label>
            <div className="mt-[2px] flex min-h-0 flex-1">
              <ul className="flex min-w-0 flex-1 flex-col overflow-hidden">
                {tree.map((n, i) => (
                  <TreeRow key={i} node={n} />
                ))}
              </ul>
              <div className="ml-px flex w-[14px] shrink-0 flex-col border-l border-[#b4b6be] bg-[#eeeff2]">
                <div className="flex h-[18px] shrink-0 items-center justify-center">
                  <svg viewBox="0 0 7 4" className="h-1 w-[7px]" aria-hidden="true">
                    <path d="m0 4 3.500-4L7 4z" fill="#4c4c54" />
                  </svg>
                </div>
                <div className="flex h-[86%] items-center justify-center rounded-sm border border-[#9a9ca4] bg-gradient-to-r from-[#f8f8f9] to-[#cdced2]">
                  <span className="h-2 w-[6px] border-y border-[#5c5e66]">
                    <span className="mt-[2px] block h-px bg-[#5c5e66]" />
                  </span>
                </div>
              </div>
            </div>
          </aside>
          <button
            type="button"
            aria-label="Collapse panel"
            className="absolute left-[189px] top-[423px] flex h-7 w-[10px] flex-col items-center justify-center gap-1 rounded-r border border-l-0 border-[#6c7084] bg-[#dcdfe9]"
          >
            {[0, 1, 2].map((k) => (
              <svg key={k} viewBox="0 0 3 4" className="h-1 w-[3px]" aria-hidden="true">
                <path d="M3 0v4L0 2z" fill="#3c4058" />
              </svg>
            ))}
          </button>
        </div>
      </main>
    </div>
  );
}
